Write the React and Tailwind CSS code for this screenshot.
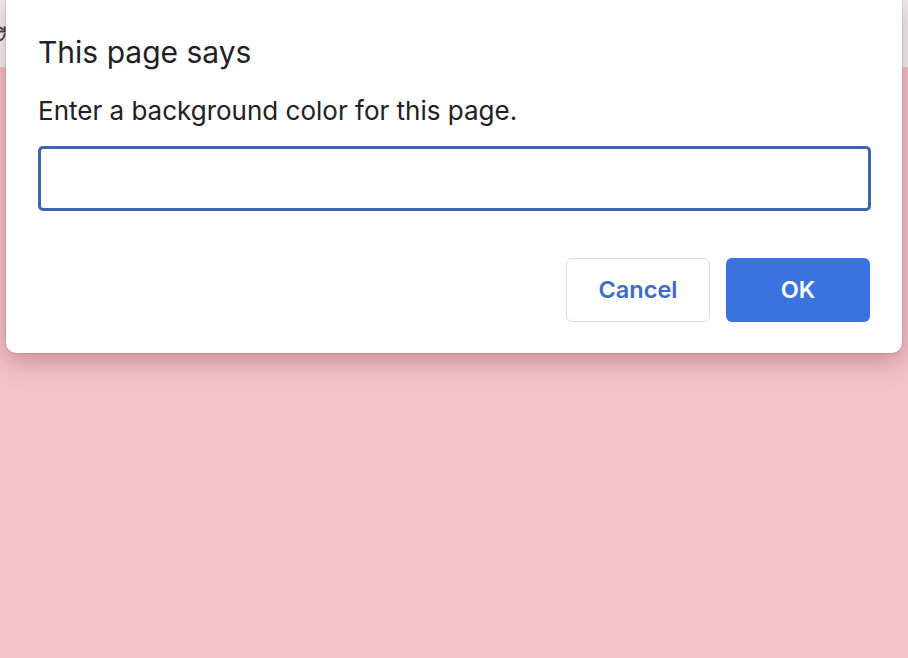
export default function App() {
  return (
    <div className="relative h-[658px] w-[908px] overflow-hidden bg-[#f4c2c9] font-['Inter',sans-serif]">
      {/* browser chrome strip behind the dialog */}
      <div className="flex h-[68px] items-center border-b border-[#d9d9d9] bg-[#f2f2f2]">
        <svg className="-ml-[12px]" width="20" height="20" viewBox="0 0 24 24" fill="none" stroke="#444" strokeWidth="2.4" strokeLinecap="round">
          <path d="M20 12a8 8 0 1 1-2.34-5.66" />
          <path d="M20 4v5h-5" />
        </svg>
      </div>

      {/* prompt dialog */}
      <div className="absolute left-[6px] top-[-8px] w-[896px] rounded-[10px] bg-white pl-[32px] pr-[31px] pt-[42px] pb-[31px] shadow-[0_8px_24px_rgba(120,40,60,0.35),0_0_0_1px_rgba(0,0,0,0.08)]">
        <h1 className="text-[30px] leading-[36px] text-[#202124]">This page says</h1>
        <p className="mt-[25px] text-[26px] leading-[32px] text-[#202124]">Enter a background color for this page.</p>
        <input
          autoFocus
          className="mt-[19px] block h-[65px] w-full rounded-[5px] border-[3px] border-[#3f65ae] bg-white px-3 text-[22px] outline-none"
        />
        <div className="mt-[47px] mr-[1px] flex justify-end gap-[16px]">
          <button className="h-[64px] w-[144px] rounded-[6px] border border-[#dadce0] bg-white text-[23.5px] font-semibold text-[#3d6cc2]">
            Cancel
          </button>
          <button className="h-[64px] w-[144px] rounded-[6px] bg-[#3a72df] text-[23.5px] font-semibold text-white">
            OK
          </button>
        </div>
      </div>
    </div>
  )
}
